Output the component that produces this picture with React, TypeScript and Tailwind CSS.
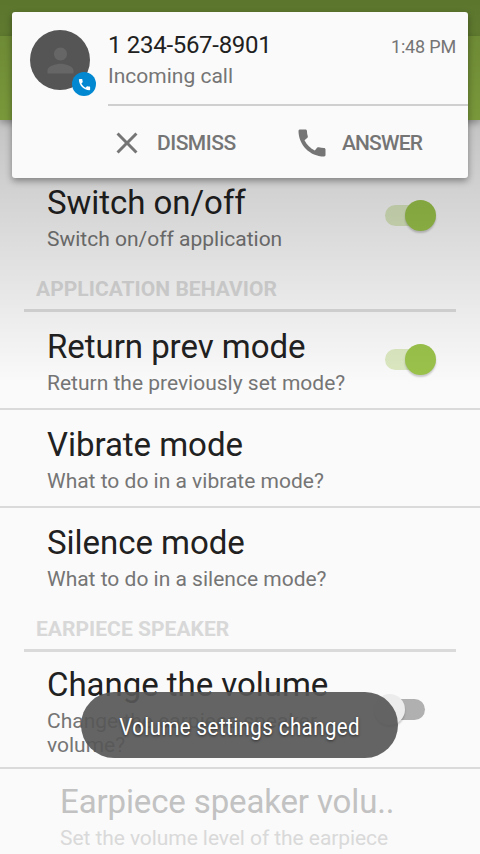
import type { ReactNode } from "react";
import { MdCall, MdClose, MdPerson } from "react-icons/md";

function Switch({ on }: { on: boolean }) {
  return (
    <div className={`relative flex h-[31px] w-[62px] shrink-0 items-center ${on ? "-mt-0.5 justify-end" : "justify-start"}`}>
      <div className={`absolute left-[11px] top-[5px] h-[21px] w-10 rounded-full ${on ? "bg-[#dbe8c0]" : "bg-[#b0b0b0]"}`} />
      <div className={`relative size-[31px] rounded-full shadow-[0_2px_2px_rgba(0,0,0,0.2)] ${on ? "bg-[#9bc34b]" : "bg-[#ececec]"}`} />
    </div>
  );
}

function Section({ children }: { children: ReactNode }) {
  return (
    <h2 className="mx-6 flex h-12 shrink-0 items-start border-b-[3px] border-[#dadada] pl-3 pt-[13px] text-[21px] font-bold leading-[25px] tracking-[0.04px] text-[#d8d8d8]">
      {children}
    </h2>
  );
}

type RowProps = {
  title: string;
  summary: string;
  control?: ReactNode;
  divider?: boolean;
  tall?: boolean;
  disabled?: boolean;
};

function Row({ title, summary, control, divider, tall, disabled }: RowProps) {
  return (
    <div
      className={`flex shrink-0 items-center pr-11 ${disabled ? "pl-[60px]" : "pl-[47px]"} ${
        tall ? "h-[117px]" : divider ? "h-[98px]" : "h-24"
      } ${divider ? "border-b-2 border-[#dadada]" : ""}`}
    >
      <div className={`flex flex-1 flex-col gap-[5px] self-start ${tall ? "pt-[13px]" : "pt-[15px]"}`}>
        <div className={`whitespace-nowrap text-[33px] leading-[39px] ${disabled ? "tracking-[-0.13px] text-[#c2c2c2]" : "tracking-[-0.04px] text-[#212121]"}`}>
          {title}
        </div>
        <div className={`text-[21px] leading-6 ${disabled ? "w-[340px] tracking-[-0.07px] text-[#d9d9d9]" : "text-[#757575]"}`}>{summary}</div>
      </div>
      {control}
    </div>
  );
}

export default function App() {
  return (
    <div className="relative h-[854px] w-[480px] overflow-hidden bg-[#fafafa] font-['Roboto',sans-serif]">
      <div className="flex h-full flex-col">
        <div className="h-9 shrink-0 bg-[#87ad43]" />
        <div className="h-[84px] shrink-0 bg-[#9bc34b] shadow-[0_3px_7px_rgba(0,0,0,0.3)]" />
        <div className="flex flex-col pt-12">
          <Row title="Switch on/off" summary="Switch on/off application" control={<Switch on />} />
          <Section>APPLICATION BEHAVIOR</Section>
          <Row title="Return prev mode" summary="Return the previously set mode?" control={<Switch on />} divider />
          <Row title="Vibrate mode" summary="What to do in a vibrate mode?" divider />
          <Row title="Silence mode" summary="What to do in a silence mode?" />
          <Section>EARPIECE SPEAKER</Section>
          <Row title="Change the volume" summary="Change the earpiece speaker volume?" control={<Switch on={false} />} divider tall />
          <Row title="Earpiece speaker volu.." summary="Set the volume level of the earpiece speaker" tall disabled />
        </div>
      </div>

      <div className="absolute inset-x-0 top-0 h-[384px] bg-linear-to-b from-black/32 to-transparent" />

      <div className="absolute left-3 top-3 flex h-[166px] w-[456px] flex-col rounded-[3px] bg-[#fafafa] shadow-[0_3px_7px_rgba(0,0,0,0.38)]">
        <div className="flex h-[92px] pl-[18px] pr-3">
          <div className="relative mt-[18px] flex size-[60px] items-center justify-center rounded-full bg-[#555555]">
            <MdPerson className="size-[39px] text-[#666666]" />
            <div className="absolute left-[42px] top-[42px] flex size-6 items-center justify-center rounded-full bg-[#0288d1]">
              <MdCall className="size-[15px] text-white" />
            </div>
          </div>
          <div className="ml-[18px] flex-1 pt-[19px]">
            <div className="text-2xl leading-7 tracking-[-0.3px] text-[#212121]">1 234-567-8901</div>
            <div className="mt-[5px] text-[21px] leading-[25px] text-[#757575]">Incoming call</div>
          </div>
          <div className="pt-6 text-lg leading-[22px] tracking-[-0.17px] text-[#757575]">1:48 PM</div>
        </div>
        <div className="ml-24 flex h-[74px] items-center border-t-2 border-[#cfcfcf] pl-px pt-0.5 text-[21px] font-medium text-[#757575]">
          <div className="flex w-[185px] items-center gap-3">
            <MdClose className="size-9" />
            <span className="pt-[2px] tracking-[-0.5px]">DISMISS</span>
          </div>
          <div className="flex items-center gap-3">
            <MdCall className="size-9" />
            <span className="pt-[2px] tracking-[-0.85px]">ANSWER</span>
          </div>
        </div>
      </div>

      <div className="absolute left-[81px] top-[692px] flex h-[66px] w-[317px] items-center justify-center rounded-full bg-[#575757]/92">
        <span className="origin-center scale-x-[0.85] whitespace-nowrap pl-px pt-1 text-2xl tracking-[0.55px] text-white [text-shadow:0_1px_3px_rgba(0,0,0,0.6)]">
          Volume settings changed
        </span>
      </div>
    </div>
  );
}
